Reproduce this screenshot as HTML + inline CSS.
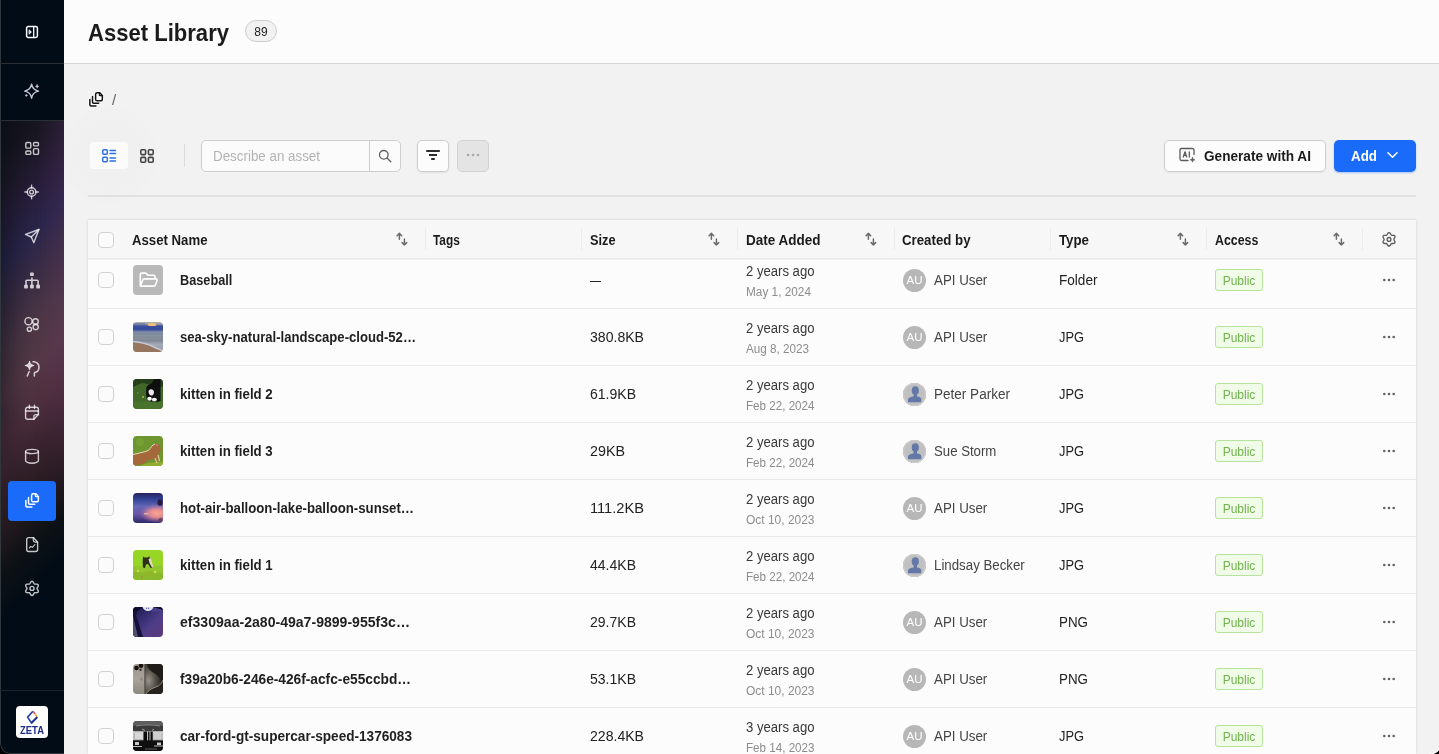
<!DOCTYPE html>
<html lang="en"><head><meta charset="utf-8"><title>Asset Library</title><style>
*{box-sizing:border-box;margin:0;padding:0}
html,body{width:1439px;height:754px;overflow:hidden;background:#f2f2f2}
body{font-family:"Liberation Sans",sans-serif;color:#1f1f1f;position:relative;font-size:14px}
#app{position:absolute;left:0;top:0;width:1439px;height:754px;overflow:hidden;will-change:transform}
.abs{position:absolute}
#side{position:absolute;z-index:5;left:0;top:0;width:64px;height:754px;background:#020c16;border-bottom-left-radius:10px;overflow:hidden}
#side .grad{position:absolute;left:0;top:121px;width:64px;height:569px;
 background:linear-gradient(135deg,#10111a 0%,#15141e 5%,#1b1825 9%,#261d38 16%,#29254a 23%,#3a2d44 30%,#4a3644 37%,#543846 44%,#4c2e3c 51%,#36222b 58%,#241a1e 65%,#0d1115 72%,#020c16 79%,#020c16 100%);
}
#side .grad2{position:absolute;left:0;top:121px;width:64px;height:400px;
 background:linear-gradient(90deg, rgba(6,10,18,.4) 0, rgba(6,10,18,.1) 30%, rgba(6,10,18,0) 50%, rgba(120,60,120,0) 55%, rgba(120,60,120,.16) 100%);
 -webkit-mask-image:linear-gradient(180deg,#000 0,#000 75%,transparent 100%);mask-image:linear-gradient(180deg,#000 0,#000 75%,transparent 100%)}
#side .ln{position:absolute;left:0;width:64px;height:1px;background:#2a2f36}
#side .edge{position:absolute;left:0;top:0;width:64px;height:754px;border-left:1px solid #30383d;border-bottom:1px solid #30383d;border-bottom-left-radius:10px}
#side .act{position:absolute;left:8px;top:481px;width:48px;height:40px;border-radius:4px;background:#1a6bfa}
#side svg{position:absolute;left:24px;width:16px;height:16px;overflow:visible}
#hdr{position:absolute;left:64px;top:0;width:1375px;height:64px;background:#fcfcfc;border-bottom:1px solid #d4d4d4}
#title{position:absolute;left:88px;top:18px;font-size:24px;font-weight:bold;line-height:30px;color:#1b1b1b;white-space:nowrap;transform-origin:0 50%}
#cnt{position:absolute;left:245px;top:20px;width:32px;height:22px;border:1px solid #cfcfcf;border-radius:11px;background:#f1f1f1;font-size:12px;line-height:22px;text-align:center;color:#222}
.t{position:absolute;white-space:nowrap;transform-origin:0 50%}
.b{font-weight:bold}
#tbl{position:absolute;left:88px;top:220px;width:1328px;height:534px;background:#fcfcfc;box-shadow:0 0 3px rgba(0,0,0,.13),0 0 1px rgba(0,0,0,.08)}
#thead{position:absolute;left:0;top:0;width:1328px;height:39px;background:#f7f7f7;border-bottom:1px solid #e8e8e8;box-shadow:0 1px 0 #f1f1f1}
.rl{position:absolute;left:0;width:1328px;height:1px;background:#e8e8e8}
.cb{position:absolute;width:16px;height:16px;border:1px solid #d2d2d2;border-radius:4px;background:#fbfbfb}
.sep{position:absolute;top:8px;width:1px;height:22px;background:#ececec}
.pub{position:absolute;width:48px;height:22px;border:1px solid #b6e49e;border-radius:3px;background:#f0fce8;color:#72b24e;font-size:12px;line-height:22px;text-align:center}
.av{position:absolute;width:23px;height:23px;border-radius:12px;background:#b7b7b7;color:#fff;font-size:11.5px;line-height:22.5px;text-align:center;overflow:hidden}
.th{position:absolute;width:30px;height:30px;border-radius:4px;overflow:hidden}
</style></head><body>
<div id="app">
<div class="abs" style="left:0;top:734px;width:20px;height:20px;background:#000;z-index:4"></div>
<div id="side"><div class="grad"></div><div class="grad2"></div><div class="edge"></div>
<div class="ln" style="top:63px"></div><div class="ln" style="top:120px"></div><div class="ln" style="top:690px;background:#1a222b"></div>
<div class="act"></div>
<svg style="top:24px" viewBox="0 0 16 16" fill="none" stroke="#fff" stroke-width="1.500" stroke-linejoin="round" stroke-linecap="round"><rect x="2.600" y="2.600" width="10.800" height="10.800" rx="1.700"/><path d="M9.700 2.600v10.800" stroke-width="1.300"/><path d="M5.300 6 L7.400 8 L5.300 10z" fill="#fff" stroke-width=".8"/></svg>
<svg style="top:83px" viewBox="0 0 16 16" fill="none" stroke="#c9c9d9" stroke-width="1.400" stroke-linejoin="round" stroke-linecap="round"><path d="M7.600 1.200C8.300 5.500 9.900 7.300 14.500 8.150 9.900 9 8.300 10.800 7.600 15.100 6.900 10.800 5.300 9 .700 8.150 5.300 7.300 6.900 5.500 7.600 1.200z"/><path d="M13.100 1.600c.2 1.200.6 1.600 1.800 1.800-1.200.2-1.600.6-1.800 1.800-.2-1.200-.6-1.600-1.800-1.800 1.200-.2 1.600-.6 1.800-1.800z" fill="#c9c9d9" stroke-width=".5"/><circle cx="2.300" cy="12.400" r=".9" fill="#c9c9d9" stroke-width=".4"/></svg>
<svg style="top:140px" viewBox="0 0 16 16" fill="none" stroke="rgba(255,255,255,.76)" stroke-width="1.400" stroke-linecap="round" stroke-linejoin="round"><rect x="1.800" y="2.500" width="5" height="5.600" rx="1.200"/><rect x="9.500" y="2.500" width="5" height="3.400" rx="1.200"/><rect x="1.800" y="11" width="5" height="3.400" rx="1.200"/><rect x="9.500" y="8.600" width="5" height="5.800" rx="1.200"/></svg>
<svg style="top:184px" viewBox="0 0 16 16" fill="none" stroke="rgba(255,255,255,.76)" stroke-width="1.400" stroke-linecap="round" stroke-linejoin="round"><circle cx="7.600" cy="8" r="4.300"/><circle cx="7.600" cy="8" r="1.900"/><path d="M7.600 1.300v2.400M7.600 12.300v2.400M.900 8h2.400M11.900 8h2.400"/></svg>
<svg style="top:228px" viewBox="0 0 16 16" fill="none" stroke="rgba(255,255,255,.76)" stroke-width="1.400" stroke-linecap="round" stroke-linejoin="round" stroke-width="1.300"><path d="M14.900 1.500 1.500 6.400l5.800 2.600 2.500 5.700z"/><path d="M14.900 1.500 7.300 9"/></svg>
<svg style="top:272px" viewBox="0 0 16 16" fill="rgba(255,255,255,.76)" stroke="none"><rect x="6" y=".5" width="3.800" height="3.600" rx=".8"/><rect x=".1" y="12.800" width="3.800" height="3.800" rx=".8"/><rect x="6" y="12.800" width="3.800" height="3.800" rx=".8"/><rect x="12.200" y="12.800" width="3.800" height="3.800" rx=".8"/><path d="M7.900 6v2.400M2 12.800V9.300a1 1 0 0 1 1-1h10.100a1 1 0 0 1 1 1v3.500M7.900 8.300v4.500" fill="none" stroke="rgba(255,255,255,.76)" stroke-width="1.600" stroke-linecap="round"/></svg>
<svg style="top:316px" viewBox="0 0 16 16" fill="none" stroke="rgba(255,255,255,.76)" stroke-width="1.400" stroke-linecap="round" stroke-linejoin="round" stroke-width="1.300"><circle cx="4.500" cy="5.200" r="3.600"/><circle cx="11.500" cy="5.500" r="2.800"/><circle cx="11.700" cy="11.100" r="2.600"/><circle cx="5.400" cy="13.200" r="2.100"/></svg>
<svg style="top:360px" viewBox="0 0 16 16" fill="none" stroke="rgba(255,255,255,.76)" stroke-width="1.400" stroke-linecap="round" stroke-linejoin="round"><path d="M9 1.800c3.500-.3 6 2.200 6 5.200 0 3-1 5-3.700 5.200-.6.100-.9.300-.9.900V16" stroke-width="1.500"/><path d="M5.500 1.300c.3 2.600 1.300 3.700 4.200 4.200-2.900.5-3.900 1.600-4.200 4.200C5.200 7.100 4.200 6 1.300 5.500 4.200 5 5.200 3.900 5.500 1.300z" fill="rgba(255,255,255,.76)" stroke-width="1.100"/><path d="M5.200 11.500 3.300 16" stroke-width="1.500"/></svg>
<svg style="top:404px" viewBox="0 0 16 16" fill="none" stroke="rgba(255,255,255,.76)" stroke-width="1.400" stroke-linecap="round" stroke-linejoin="round"><path d="M14.400 10.500V5.300a2 2 0 0 0-2-2H3.600a2 2 0 0 0-2 2v8a2 2 0 0 0 2 2h6.300z"/><path d="M14.400 10.600h-2.500a2 2 0 0 0-2 2v2.700M5.400 1.200v3.200M10.500 1.200v3.200M1.600 7h12.800"/></svg>
<svg style="top:448px" viewBox="0 0 16 16" fill="none" stroke="rgba(255,255,255,.76)" stroke-width="1.400" stroke-linecap="round" stroke-linejoin="round"><ellipse cx="8" cy="3.500" rx="6.400" ry="2.100"/><path d="M1.600 3.500v9c0 1.500 2.900 2.800 6.400 2.800s6.400-1.300 6.400-2.800v-9"/></svg>
<svg style="top:492px" viewBox="0 0 16 16" fill="none" stroke="#fff" stroke-width="1.500" stroke-linecap="round" stroke-linejoin="round"><path d="M9.200 1.850h2.600l2.550 2.700v3.700a1.600 1.600 0 0 1-1.600 1.600H9.200a1.600 1.600 0 0 1-1.600-1.600V3.450a1.600 1.600 0 0 1 1.600-1.600z"/><path d="M11.300 2v1.700a1 1 0 0 0 1 1h1.900" stroke-width="1.200"/><path d="M4.500 5.400v5.600a1.200 1.200 0 0 0 1.200 1.200h5"/><path d="M1.850 8.400v5.400a1.200 1.200 0 0 0 1.200 1.200h4.900"/></svg>
<svg style="top:536px" viewBox="0 0 16 16" fill="none" stroke="rgba(255,255,255,.76)" stroke-width="1.400" stroke-linecap="round" stroke-linejoin="round"><path d="M9.300 1.600H4.700a2 2 0 0 0-2 2v9.900a2 2 0 0 0 2 2h6.900a2 2 0 0 0 2-2V6z"/><path d="M9.300 1.700v2.400a2 2 0 0 0 2 2h2.200M5.400 11.900l1.400-1.500 1.600.9 2.500-2.600" stroke-width="1.200"/></svg>
<svg style="top:580px" viewBox="0 0 16 16" fill="none" stroke="rgba(255,255,255,.76)" stroke-width="1.400" stroke-linecap="round" stroke-linejoin="round"><path d="M13.00 8.40 L13.12 7.95 L13.44 7.44 L13.84 6.83 L14.18 6.15 L14.31 5.46 L14.15 4.85 L13.70 4.41 L13.04 4.17 L12.28 4.12 L11.55 4.17 L10.95 4.19 L10.50 4.07 L10.17 3.74 L9.89 3.21 L9.57 2.56 L9.14 1.92 L8.61 1.47 L8.00 1.30 L7.39 1.47 L6.86 1.92 L6.43 2.56 L6.11 3.21 L5.83 3.74 L5.50 4.07 L5.05 4.19 L4.45 4.17 L3.72 4.12 L2.96 4.17 L2.30 4.41 L1.85 4.85 L1.69 5.46 L1.82 6.15 L2.16 6.83 L2.56 7.44 L2.88 7.95 L3.00 8.40 L2.88 8.85 L2.56 9.36 L2.16 9.97 L1.82 10.65 L1.69 11.34 L1.85 11.95 L2.30 12.39 L2.96 12.63 L3.72 12.68 L4.45 12.63 L5.05 12.61 L5.50 12.73 L5.83 13.06 L6.11 13.59 L6.43 14.24 L6.86 14.88 L7.39 15.33 L8.00 15.50 L8.61 15.33 L9.14 14.88 L9.57 14.24 L9.89 13.59 L10.17 13.06 L10.50 12.73 L10.95 12.61 L11.55 12.63 L12.28 12.68 L13.04 12.63 L13.70 12.39 L14.15 11.95 L14.31 11.34 L14.18 10.65 L13.84 9.97 L13.44 9.36 L13.12 8.85Z"/><circle cx="8" cy="8.400" r="2"/></svg>
<div style="position:absolute;left:16px;top:706px;width:32px;height:32px;border-radius:4px;background:#fff"></div>
<svg style="left:16px;top:706px;width:32px;height:32px" viewBox="0 0 32 32"><path d="M16.900 5.300 11.600 11.100 15.500 16.900 21.200 11.100" fill="none" stroke="#2446b8" stroke-width="1.700" stroke-linejoin="miter"/><path d="M16.900 5.300 19 8" stroke="#e2574c" stroke-width="1.700"/><path d="M19 8 21.200 11.100" stroke="#e9b44c" stroke-width="1.700"/><path d="M15.500 16.900 21.200 11.100" stroke="#1b2f8a" stroke-width="1.700"/><text x="16" y="27.800" text-anchor="middle" font-family="Liberation Sans, sans-serif" font-weight="bold" font-size="10.500" fill="#1c2c84" textLength="24" lengthAdjust="spacingAndGlyphs">ZETA</text></svg>
</div>
<div id="hdr"></div>
<div id="title" style="transform:scaleX(0.9191)">Asset Library</div>
<div id="cnt">89</div>
<svg class="abs" style="left:88px;top:91px;overflow:visible" width="16" height="16" viewBox="0 0 16 16" fill="none" stroke="#141414" stroke-width="1.500" stroke-linecap="round" stroke-linejoin="round"><g stroke="#fbfbfb" stroke-width="3.600" fill="#fbfbfb"><path d="M9.200 1.850h2.600l2.550 2.700v3.700a1.600 1.600 0 0 1-1.600 1.600H9.200a1.600 1.600 0 0 1-1.600-1.600V3.450a1.600 1.600 0 0 1 1.600-1.600z"/><path d="M4.500 5.400v5.600a1.200 1.200 0 0 0 1.200 1.200h5"/><path d="M1.850 8.400v5.400a1.200 1.200 0 0 0 1.200 1.200h4.900"/></g><path d="M9.200 1.850h2.600l2.550 2.700v3.700a1.600 1.600 0 0 1-1.600 1.600H9.200a1.600 1.600 0 0 1-1.600-1.600V3.450a1.600 1.600 0 0 1 1.600-1.600z"/><path d="M11.300 2v1.700a1 1 0 0 0 1 1h1.900" stroke-width="1.200"/><path d="M4.500 5.400v5.600a1.200 1.200 0 0 0 1.200 1.200h5"/><path d="M1.850 8.400v5.400a1.200 1.200 0 0 0 1.200 1.200h4.900"/></svg>
<div class="t" style="left:112px;top:91px;font-size:15px;line-height:18px;color:#666">/</div>
<div class="abs" style="left:61px;top:107px;width:96px;height:96px;border-radius:48px;background:radial-gradient(circle,#efefef 0,#f0f0f0 50%,#f2f2f2 95%)"></div>
<div class="abs" style="left:90px;top:142px;width:38px;height:27px;border-radius:4px;background:#fbfbfb"></div>
<svg class="abs" style="left:101px;top:148px" width="16" height="16" viewBox="0 0 16 16" fill="none" stroke="#2f6fe6" stroke-width="1.500" stroke-linecap="round" stroke-linejoin="round"><rect x="1.700" y="1.700" width="4.600" height="4.600" rx="1"/><rect x="1.700" y="9.200" width="4.600" height="4.600" rx="1"/><path d="M9 2.500h5.500M9 5.500h5.500M9 10h5.500M9 13h5.500"/></svg>
<svg class="abs" style="left:139px;top:148px" width="16" height="16" viewBox="0 0 16 16" fill="none" stroke="#444" stroke-width="1.600" stroke-linejoin="round"><rect x="1.800" y="1.800" width="4.800" height="4.800" rx="1"/><rect x="9.400" y="1.800" width="4.800" height="4.800" rx="1"/><rect x="1.800" y="9.400" width="4.800" height="4.800" rx="1"/><rect x="9.400" y="9.400" width="4.800" height="4.800" rx="1"/></svg>
<div class="abs" style="left:184px;top:144px;width:1px;height:23px;background:#dcdcdc"></div>
<div class="abs" style="left:201px;top:140px;width:200px;height:32px;border:1px solid #cdcdcd;border-radius:5px;background:#fbfbfb"></div>
<div class="abs" style="left:369px;top:141px;width:1px;height:30px;background:#cdcdcd"></div>
<div class="t" style="transform:scaleX(0.9548);left:213px;top:147px;font-size:14px;line-height:18px;color:#b3b3b3">Describe an asset</div>
<svg class="abs" style="left:377px;top:147.500px" width="16" height="16" viewBox="0 0 16 16" fill="none" stroke="#606060" stroke-width="1.300" stroke-linecap="round"><circle cx="6.800" cy="6.800" r="4.300"/><path d="M10 10 13.800 13.800"/></svg>
<div class="abs" style="left:417px;top:140px;width:32px;height:32px;border:1px solid #cdcdcd;border-radius:5px;background:#fcfcfc;box-shadow:0 1px 2px rgba(0,0,0,.08)"></div>
<svg class="abs" style="left:425px;top:147px" width="16" height="16" viewBox="0 0 16 16" fill="none" stroke="#2e2e2e" stroke-width="1.800" stroke-linecap="butt"><path d="M1.200 4h13.600M4 8h8M6.200 12h3.600"/></svg>
<div class="abs" style="left:457px;top:140px;width:32px;height:32px;border:1px solid #d2d2d2;border-radius:5px;background:#e4e4e4"></div>
<svg class="abs" style="left:466px;top:153px" width="14" height="4" viewBox="0 0 14 4"><circle cx="2" cy="2" r="1.300" fill="#a9a9a9"/><circle cx="7" cy="2" r="1.300" fill="#a9a9a9"/><circle cx="12" cy="2" r="1.300" fill="#a9a9a9"/></svg>
<div class="abs" style="left:88px;top:195px;width:1328px;height:2px;background:#e0e0e0"></div>
<div class="abs" style="left:1164px;top:140px;width:162px;height:32px;border:1px solid #cdcdcd;border-radius:5px;background:#fcfcfc;box-shadow:0 1px 2px rgba(0,0,0,.06)"></div>
<svg class="abs" style="left:1179px;top:147px" width="17" height="17" viewBox="0 0 17 17" fill="none" stroke="#5a5a5a" stroke-width="1.300" stroke-linecap="round" stroke-linejoin="round"><path d="M15 7.500V3a1.500 1.500 0 0 0-1.500-1.500h-11A1.500 1.500 0 0 0 1 3v9a1.500 1.500 0 0 0 1.500 1.500H9"/><path d="M4.300 10 6 4.800 7.700 10M4.900 8.300h2.200M10.300 4.800V10"/><path d="M13.500 10.500c.2 1.500.8 2.100 2.300 2.300-1.500.2-2.100.8-2.300 2.300-.2-1.500-.8-2.100-2.300-2.300 1.500-.2 2.100-.8 2.300-2.300z" fill="#5a5a5a" stroke-width=".8"/></svg>
<div class="t b" style="transform:scaleX(0.9731);left:1203.5px;top:147px;font-size:14px;line-height:18px;color:#1b1b1b">Generate with AI</div>
<div class="abs" style="left:1334px;top:140px;width:82px;height:32px;border-radius:5px;background:#1a6bfa;box-shadow:0 1px 2px rgba(26,107,250,.35)"></div>
<div class="t b" style="transform:scaleX(0.9552);left:1350.5px;top:147px;font-size:14px;line-height:18px;color:#fff">Add</div>
<svg class="abs" style="left:1386px;top:150px" width="13" height="10" viewBox="0 0 13 10" fill="none" stroke="#fff" stroke-width="1.600" stroke-linecap="round" stroke-linejoin="round"><path d="M2 2.800 6.500 7.200 11 2.800"/></svg>

<div id="tbl">
<div class="cb" style="left:10px;top:52px"></div>
<div class="th" style="left:44.5px;top:45px"><svg viewBox="0 0 30 30" width="30" height="30" style="display:block"><rect width="30" height="30" fill="#b9b9b9"/><path d="M7.300 21V9.600c0-.9.600-1.500 1.500-1.500h3.600c.5 0 .9.200 1.200.6l1.200 1.600h5.700c.9 0 1.500.6 1.500 1.500v1.900M7.300 21l2.500-6c.3-.7.800-1.100 1.500-1.100H23c.9 0 1.400.8 1.100 1.600l-1.700 4.500c-.3.700-.8 1.100-1.500 1.100H8.400c-.7 0-1.100-.4-1.100-1.100z" fill="none" stroke="#fff" stroke-width="1.600" stroke-linejoin="round" stroke-linecap="round"/></svg>
</div>
<div class="t b" style="transform:scaleX(0.9081);left:92px;top:51.0px;font-size:14px;line-height:18px;color:#1f1f1f;">Baseball</div>
<div class="t" style="transform:scaleX(0.7857);left:502px;top:51.0px;font-size:14px;line-height:18px;color:#222;">—</div>
<div class="t" style="transform:scaleX(0.9362);left:658px;top:41.5px;font-size:14px;line-height:18px;color:#383838;">2 years ago</div>
<div class="t" style="transform:scaleX(0.9841);left:658px;top:63.5px;font-size:12px;line-height:16px;color:#8c8c8c;">May 1, 2024</div>
<div class="av" style="left:815px;top:48.5px">AU</div>
<div class="t" style="transform:scaleX(0.9515);left:846px;top:51.0px;font-size:14px;line-height:18px;color:#444;">API User</div>
<div class="t" style="transform:scaleX(0.9701);left:971px;top:51.0px;font-size:14px;line-height:18px;color:#222;">Folder</div>
<div class="pub" style="left:1127px;top:49px">Public</div>
<svg class="abs" style="left:1293.7px;top:58px" width="14" height="4" viewBox="0 0 14 4"><circle cx="2.300" cy="2" r="1.300" fill="#636363"/><circle cx="7" cy="2" r="1.300" fill="#636363"/><circle cx="11.700" cy="2" r="1.300" fill="#636363"/></svg>
<div class="rl" style="top:88px"></div>
<div class="cb" style="left:10px;top:109px"></div>
<div class="th" style="left:44.5px;top:102px">
<svg viewBox="0 0 30 30" width="30" height="30" style="display:block"><defs><linearGradient id="s1" x1="0" y1="0" x2="0" y2="1"><stop offset="0" stop-color="#b9b7a8"/><stop offset=".08" stop-color="#8f92a6"/><stop offset=".13" stop-color="#3a4c9c"/><stop offset=".27" stop-color="#4558a2"/><stop offset=".33" stop-color="#7f8ca6"/><stop offset=".5" stop-color="#8c949e"/><stop offset=".62" stop-color="#7f8896"/><stop offset=".75" stop-color="#a4a9b6"/><stop offset="1" stop-color="#9096a2"/></linearGradient></defs><rect width="30" height="30" fill="url(#s1)"/><ellipse cx="19" cy="2.500" rx="4.500" ry="1.600" fill="#f0c07c"/><path d="M0 1h12v2H0z" fill="#6a78a8" opacity=".7"/><path d="M0 5.500h30v2H0z" fill="#2f449a" opacity=".6"/><path d="M0 12h30M0 15h30" stroke="#6f7a90" stroke-width=".8" opacity=".6"/><path d="M0 20c6 .5 14 2 20 5s8 3.500 10 5H0z" fill="#96765e"/><path d="M0 19.500c6 .5 14 2 20 5 3 1.500 7 3 10 4.500" stroke="#c6c4d2" stroke-width="1.500" fill="none"/></svg>
</div>
<div class="t b" style="transform:scaleX(0.9362);left:92px;top:108.0px;font-size:14px;line-height:18px;color:#1f1f1f;">sea-sky-natural-landscape-cloud-52…</div>
<div class="t" style="transform:scaleX(1.0052);left:502px;top:108.0px;font-size:14px;line-height:18px;color:#222;">380.8KB</div>
<div class="t" style="transform:scaleX(0.9362);left:658px;top:98.5px;font-size:14px;line-height:18px;color:#383838;">2 years ago</div>
<div class="t" style="transform:scaleX(0.9732);left:658px;top:120.5px;font-size:12px;line-height:16px;color:#8c8c8c;">Aug 8, 2023</div>
<div class="av" style="left:815px;top:105.5px">AU</div>
<div class="t" style="transform:scaleX(0.9515);left:846px;top:108.0px;font-size:14px;line-height:18px;color:#444;">API User</div>
<div class="t" style="transform:scaleX(0.9180);left:971px;top:108.0px;font-size:14px;line-height:18px;color:#222;">JPG</div>
<div class="pub" style="left:1127px;top:106px">Public</div>
<svg class="abs" style="left:1293.7px;top:115px" width="14" height="4" viewBox="0 0 14 4"><circle cx="2.300" cy="2" r="1.300" fill="#636363"/><circle cx="7" cy="2" r="1.300" fill="#636363"/><circle cx="11.700" cy="2" r="1.300" fill="#636363"/></svg>
<div class="rl" style="top:145px"></div>
<div class="cb" style="left:10px;top:166px"></div>
<div class="th" style="left:44.5px;top:159px">
<svg viewBox="0 0 30 30" width="30" height="30" style="display:block"><rect width="30" height="30" fill="#40692a"/><path d="M0 0h30v8L20 6 9 4 0 8z" fill="#263f1a"/><path d="M13.500 8.500c.5-2 2.500-3.500 4.500-3.500l3-4.500 2-.5h4.500v22l-3 1.500-6-.5-4-1.500c-1.500-4-1.800-8.500-1-13z" fill="#0d100e"/><path d="M15.500 12c1-1.800 3.200-2.300 4.800-.8 1.200 1.500.8 4-.8 5.200-2.300.8-4.200-1.500-4-4.400z" fill="#e9e9e9"/><ellipse cx="16.500" cy="19.800" rx="2.300" ry="2" fill="#f6f6f6"/><ellipse cx="21.300" cy="20.600" rx="2.500" ry="1.900" fill="#f1f1f1"/><circle cx="10" cy="18" r="1" fill="#b6c23a"/><circle cx="5" cy="14" r=".8" fill="#6e9a44"/><path d="M0 22.500h30V30H0z" fill="#4b7a2e" opacity=".65"/></svg>
</div>
<div class="t b" style="transform:scaleX(0.9458);left:92px;top:165.0px;font-size:14px;line-height:18px;color:#1f1f1f;">kitten in field 2</div>
<div class="t" style="transform:scaleX(1.0014);left:502px;top:165.0px;font-size:14px;line-height:18px;color:#222;">61.9KB</div>
<div class="t" style="transform:scaleX(0.9362);left:658px;top:155.5px;font-size:14px;line-height:18px;color:#383838;">2 years ago</div>
<div class="t" style="transform:scaleX(0.9684);left:658px;top:177.5px;font-size:12px;line-height:16px;color:#8c8c8c;">Feb 22, 2024</div>
<div class="av" style="left:815px;top:162.5px"><svg viewBox="0 0 23 23" width="23" height="23" style="display:block"><rect width="23" height="23" fill="#c0c0c0"/><circle cx="11.500" cy="11.500" r="11" fill="none" stroke="#cfcfcf" stroke-width="1"/><ellipse cx="12.300" cy="7.600" rx="3.600" ry="4.300" fill="#6478a8"/><rect x="10.600" y="10" width="3.400" height="4.500" fill="#6478a8"/><path d="M5 19.300V16.500c0-1.500 2-2.200 5-2.900h4.600c3 .7 3.700 1.400 3.700 2.900v2.800z" fill="#6478a8"/></svg></div>
<div class="t" style="transform:scaleX(0.9670);left:846px;top:165.0px;font-size:14px;line-height:18px;color:#444;">Peter Parker</div>
<div class="t" style="transform:scaleX(0.9180);left:971px;top:165.0px;font-size:14px;line-height:18px;color:#222;">JPG</div>
<div class="pub" style="left:1127px;top:163px">Public</div>
<svg class="abs" style="left:1293.7px;top:172px" width="14" height="4" viewBox="0 0 14 4"><circle cx="2.300" cy="2" r="1.300" fill="#636363"/><circle cx="7" cy="2" r="1.300" fill="#636363"/><circle cx="11.700" cy="2" r="1.300" fill="#636363"/></svg>
<div class="rl" style="top:202px"></div>
<div class="cb" style="left:10px;top:223px"></div>
<div class="th" style="left:44.5px;top:216px">
<svg viewBox="0 0 30 30" width="30" height="30" style="display:block"><rect width="30" height="30" fill="#6d962e"/><circle cx="7" cy="6" r="4" fill="#7aa23a" opacity=".7"/><path d="M0 18.500c5-1 11-2.500 15.500-4 2-2.500 3.500-5.500 6.500-6.500 2-.5 4 .5 5 2.500.8 1.500 1 3 .5 4.500l-1.500 2-1.500 4 1 4.500-3 .5-1.500-3.500-5 1.500-5 3.500-6 1.500-5 1z" fill="#a4683a"/><path d="M0 18.500c5-1 11-2.500 15.500-4 2-2.500 3.500-5.500 6.500-6.500" stroke="#e8dcc0" stroke-width="1" fill="none"/><path d="M22.500 8.500l1.500-.8 1.500 1.500-1.500 1z" fill="#e0707a"/><path d="M7 30c3-2 7-3 11-3.500l12-1V30z" fill="#8fae2f"/><path d="M22 22l2 5M25 19l1.500 6" stroke="#e3c79a" stroke-width="1.200"/></svg>
</div>
<div class="t b" style="transform:scaleX(0.9458);left:92px;top:222.0px;font-size:14px;line-height:18px;color:#1f1f1f;">kitten in field 3</div>
<div class="t" style="transform:scaleX(1.0219);left:502px;top:222.0px;font-size:14px;line-height:18px;color:#222;">29KB</div>
<div class="t" style="transform:scaleX(0.9362);left:658px;top:212.5px;font-size:14px;line-height:18px;color:#383838;">2 years ago</div>
<div class="t" style="transform:scaleX(0.9684);left:658px;top:234.5px;font-size:12px;line-height:16px;color:#8c8c8c;">Feb 22, 2024</div>
<div class="av" style="left:815px;top:219.5px"><svg viewBox="0 0 23 23" width="23" height="23" style="display:block"><rect width="23" height="23" fill="#c0c0c0"/><circle cx="11.500" cy="11.500" r="11" fill="none" stroke="#cfcfcf" stroke-width="1"/><ellipse cx="12.300" cy="7.600" rx="3.600" ry="4.300" fill="#6478a8"/><rect x="10.600" y="10" width="3.400" height="4.500" fill="#6478a8"/><path d="M5 19.300V16.500c0-1.500 2-2.200 5-2.900h4.600c3 .7 3.700 1.400 3.700 2.900v2.800z" fill="#6478a8"/></svg></div>
<div class="t" style="transform:scaleX(0.9419);left:846px;top:222.0px;font-size:14px;line-height:18px;color:#444;">Sue Storm</div>
<div class="t" style="transform:scaleX(0.9180);left:971px;top:222.0px;font-size:14px;line-height:18px;color:#222;">JPG</div>
<div class="pub" style="left:1127px;top:220px">Public</div>
<svg class="abs" style="left:1293.7px;top:229px" width="14" height="4" viewBox="0 0 14 4"><circle cx="2.300" cy="2" r="1.300" fill="#636363"/><circle cx="7" cy="2" r="1.300" fill="#636363"/><circle cx="11.700" cy="2" r="1.300" fill="#636363"/></svg>
<div class="rl" style="top:259px"></div>
<div class="cb" style="left:10px;top:280px"></div>
<div class="th" style="left:44.5px;top:273px">
<svg viewBox="0 0 30 30" width="30" height="30" style="display:block"><defs><linearGradient id="b1" x1="0" y1="0" x2="0" y2="1"><stop offset="0" stop-color="#24225c"/><stop offset=".22" stop-color="#34459a"/><stop offset=".45" stop-color="#6566b6"/><stop offset=".7" stop-color="#6a57a8"/><stop offset="1" stop-color="#2c2868"/></linearGradient><radialGradient id="b2" cx=".8" cy=".68" r=".6" gradientTransform="translate(0 .32) scale(1 .53)"><stop offset="0" stop-color="#ffa88c"/><stop offset=".45" stop-color="#f29290" stop-opacity=".85"/><stop offset="1" stop-color="#b070a8" stop-opacity="0"/></radialGradient></defs><rect width="30" height="30" fill="url(#b1)"/><rect width="30" height="30" fill="url(#b2)"/><ellipse cx="27" cy="9.500" rx="2.600" ry="3.200" fill="#2a1c38"/><circle cx="27.500" cy="27" r="2" fill="#6a4060"/><rect x="11" y="20.300" width="4" height="1" fill="#ffe9b0" opacity=".8"/></svg>
</div>
<div class="t b" style="transform:scaleX(0.9431);left:92px;top:279.0px;font-size:14px;line-height:18px;color:#1f1f1f;">hot-air-balloon-lake-balloon-sunset…</div>
<div class="t" style="transform:scaleX(1.0457);left:502px;top:279.0px;font-size:14px;line-height:18px;color:#222;">111.2KB</div>
<div class="t" style="transform:scaleX(0.9362);left:658px;top:269.5px;font-size:14px;line-height:18px;color:#383838;">2 years ago</div>
<div class="t" style="transform:scaleX(0.9968);left:658px;top:291.5px;font-size:12px;line-height:16px;color:#8c8c8c;">Oct 10, 2023</div>
<div class="av" style="left:815px;top:276.5px">AU</div>
<div class="t" style="transform:scaleX(0.9515);left:846px;top:279.0px;font-size:14px;line-height:18px;color:#444;">API User</div>
<div class="t" style="transform:scaleX(0.9180);left:971px;top:279.0px;font-size:14px;line-height:18px;color:#222;">JPG</div>
<div class="pub" style="left:1127px;top:277px">Public</div>
<svg class="abs" style="left:1293.7px;top:286px" width="14" height="4" viewBox="0 0 14 4"><circle cx="2.300" cy="2" r="1.300" fill="#636363"/><circle cx="7" cy="2" r="1.300" fill="#636363"/><circle cx="11.700" cy="2" r="1.300" fill="#636363"/></svg>
<div class="rl" style="top:316px"></div>
<div class="cb" style="left:10px;top:337px"></div>
<div class="th" style="left:44.5px;top:330px">
<svg viewBox="0 0 30 30" width="30" height="30" style="display:block"><rect width="30" height="30" fill="#97d527"/><path d="M0 17c5-1.500 10 0 15-.5s10-1.500 15-.5v14H0z" fill="#93c52e"/><path d="M0 22c4-1 8 1 12 0s8-1 12 .5 4 .5 6 0V30H0z" fill="#8ab52c" opacity=".8"/><circle cx="5" cy="21" r="1.300" fill="#c9d84a"/><circle cx="14" cy="24" r="1.500" fill="#b9a33a" opacity=".7"/><circle cx="22" cy="22" r="1.300" fill="#d3dc50"/><circle cx="9" cy="27" r="1.200" fill="#a88a3a" opacity=".6"/><path d="M10 6.500l1.500 1h3l2-1.200 1 3.200-.5 3 2.500 5-2 .5-2.500-4-2 .500-1 3.500-2-.5c-.5-3.500-.3-7.500 0-11z" fill="#2c3018"/><path d="M15.500 9l2.500-1 1 5 1.500 4-1.500.5-2.500-4.500z" fill="#e3d8c0"/><path d="M16 7.500l1-.8.500 2z" fill="#c97060"/></svg>
</div>
<div class="t b" style="transform:scaleX(0.9458);left:92px;top:336.0px;font-size:14px;line-height:18px;color:#1f1f1f;">kitten in field 1</div>
<div class="t" style="transform:scaleX(1.0014);left:502px;top:336.0px;font-size:14px;line-height:18px;color:#222;">44.4KB</div>
<div class="t" style="transform:scaleX(0.9362);left:658px;top:326.5px;font-size:14px;line-height:18px;color:#383838;">2 years ago</div>
<div class="t" style="transform:scaleX(0.9684);left:658px;top:348.5px;font-size:12px;line-height:16px;color:#8c8c8c;">Feb 22, 2024</div>
<div class="av" style="left:815px;top:333.5px"><svg viewBox="0 0 23 23" width="23" height="23" style="display:block"><rect width="23" height="23" fill="#c0c0c0"/><circle cx="11.500" cy="11.500" r="11" fill="none" stroke="#cfcfcf" stroke-width="1"/><ellipse cx="12.300" cy="7.600" rx="3.600" ry="4.300" fill="#6478a8"/><rect x="10.600" y="10" width="3.400" height="4.500" fill="#6478a8"/><path d="M5 19.300V16.500c0-1.500 2-2.200 5-2.900h4.600c3 .7 3.700 1.400 3.700 2.900v2.800z" fill="#6478a8"/></svg></div>
<div class="t" style="transform:scaleX(0.9486);left:846px;top:336.0px;font-size:14px;line-height:18px;color:#444;">Lindsay Becker</div>
<div class="t" style="transform:scaleX(0.9180);left:971px;top:336.0px;font-size:14px;line-height:18px;color:#222;">JPG</div>
<div class="pub" style="left:1127px;top:334px">Public</div>
<svg class="abs" style="left:1293.7px;top:343px" width="14" height="4" viewBox="0 0 14 4"><circle cx="2.300" cy="2" r="1.300" fill="#636363"/><circle cx="7" cy="2" r="1.300" fill="#636363"/><circle cx="11.700" cy="2" r="1.300" fill="#636363"/></svg>
<div class="rl" style="top:373px"></div>
<div class="cb" style="left:10px;top:394px"></div>
<div class="th" style="left:44.5px;top:387px">
<svg viewBox="0 0 30 30" width="30" height="30" style="display:block"><defs><linearGradient id="p1" x1="0" y1="0" x2="1" y2="1"><stop offset="0" stop-color="#1c1848"/><stop offset=".35" stop-color="#352d70"/><stop offset=".6" stop-color="#4d3d88"/><stop offset="1" stop-color="#5d3a78"/></linearGradient></defs><rect width="30" height="30" fill="url(#p1)"/><path d="M0 0h6L3 8l7 22H0z" fill="#15123a"/><path d="M0 9l5 21H0z" fill="#6a6a8a" opacity=".7"/><path d="M12 0h16l2 4-10 1z" fill="#57489a" opacity=".6"/><path d="M0 0h10l-4 3-6 2zM20 0h10v3z" fill="#0e0c28"/><path d="M9.500 0c1 2.500 3 4 5.500 4s4.500-1.500 5.500-4z" fill="#e9e9f2"/><path d="M13 .8h1.200v1H13zM15 .8h1.200v1H15z" fill="#3a4ab0"/></svg>
</div>
<div class="t b" style="transform:scaleX(1.0051);left:92px;top:393.0px;font-size:14px;line-height:18px;color:#1f1f1f;">ef3309aa-2a80-49a7-9899-955f3c…</div>
<div class="t" style="transform:scaleX(1.0014);left:502px;top:393.0px;font-size:14px;line-height:18px;color:#222;">29.7KB</div>
<div class="t" style="transform:scaleX(0.9362);left:658px;top:383.5px;font-size:14px;line-height:18px;color:#383838;">2 years ago</div>
<div class="t" style="transform:scaleX(0.9968);left:658px;top:405.5px;font-size:12px;line-height:16px;color:#8c8c8c;">Oct 10, 2023</div>
<div class="av" style="left:815px;top:390.5px">AU</div>
<div class="t" style="transform:scaleX(0.9515);left:846px;top:393.0px;font-size:14px;line-height:18px;color:#444;">API User</div>
<div class="t" style="transform:scaleX(0.9557);left:971px;top:393.0px;font-size:14px;line-height:18px;color:#222;">PNG</div>
<div class="pub" style="left:1127px;top:391px">Public</div>
<svg class="abs" style="left:1293.7px;top:400px" width="14" height="4" viewBox="0 0 14 4"><circle cx="2.300" cy="2" r="1.300" fill="#636363"/><circle cx="7" cy="2" r="1.300" fill="#636363"/><circle cx="11.700" cy="2" r="1.300" fill="#636363"/></svg>
<div class="rl" style="top:430px"></div>
<div class="cb" style="left:10px;top:451px"></div>
<div class="th" style="left:44.5px;top:444px">
<svg viewBox="0 0 30 30" width="30" height="30" style="display:block"><defs><linearGradient id="i1" x1="0" y1="0" x2="0" y2="1"><stop offset="0" stop-color="#9a948c"/><stop offset=".5" stop-color="#aaa39b"/><stop offset="1" stop-color="#8e8880"/></linearGradient><radialGradient id="i2" cx=".2" cy=".55" r=".7"><stop offset="0" stop-color="#9a9288"/><stop offset=".5" stop-color="#5a554e"/><stop offset="1" stop-color="#2a2724"/></radialGradient></defs><rect width="30" height="30" fill="url(#i1)"/><rect x="12" width="18" height="30" fill="url(#i2)"/><path d="M14 0h16v22c-1-6-4-10-9-13S14 3 14 0z" fill="#1f1c1a"/><path d="M13 30c2-4 6-5.500 10-7s6-4 7-8v15z" fill="#26231f"/><path d="M13 30c2-4 6-5.500 10-7s6-4 7-7" fill="none" stroke="#b5ab9c" stroke-width=".9" opacity=".8"/><rect x="11.300" y="0" width="1" height="30" fill="#4e4a45"/><circle cx="3.500" cy="4" r="2.300" fill="#16100f"/><circle cx="8" cy="1.800" r="2.300" fill="#16100f"/><circle cx="7.500" cy="5.800" r="1.200" fill="#3a3430"/><ellipse cx="8.500" cy="15" rx="1.600" ry="1.800" fill="#8f887e"/></svg>
</div>
<div class="t b" style="transform:scaleX(0.9796);left:92px;top:450.0px;font-size:14px;line-height:18px;color:#1f1f1f;">f39a20b6-246e-426f-acfc-e55ccbd…</div>
<div class="t" style="transform:scaleX(1.0014);left:502px;top:450.0px;font-size:14px;line-height:18px;color:#222;">53.1KB</div>
<div class="t" style="transform:scaleX(0.9362);left:658px;top:440.5px;font-size:14px;line-height:18px;color:#383838;">2 years ago</div>
<div class="t" style="transform:scaleX(0.9968);left:658px;top:462.5px;font-size:12px;line-height:16px;color:#8c8c8c;">Oct 10, 2023</div>
<div class="av" style="left:815px;top:447.5px">AU</div>
<div class="t" style="transform:scaleX(0.9515);left:846px;top:450.0px;font-size:14px;line-height:18px;color:#444;">API User</div>
<div class="t" style="transform:scaleX(0.9557);left:971px;top:450.0px;font-size:14px;line-height:18px;color:#222;">PNG</div>
<div class="pub" style="left:1127px;top:448px">Public</div>
<svg class="abs" style="left:1293.7px;top:457px" width="14" height="4" viewBox="0 0 14 4"><circle cx="2.300" cy="2" r="1.300" fill="#636363"/><circle cx="7" cy="2" r="1.300" fill="#636363"/><circle cx="11.700" cy="2" r="1.300" fill="#636363"/></svg>
<div class="rl" style="top:487px"></div>
<div class="cb" style="left:10px;top:508px"></div>
<div class="th" style="left:44.5px;top:501px">
<svg viewBox="0 0 30 30" width="30" height="30" style="display:block"><rect width="30" height="30" fill="#3b3b3b"/><path d="M0 0h30v5c-8-2-22-2-30 0z" fill="#5e5e5e"/><path d="M3 5c7-1.500 17-1.500 24 0" stroke="#8a8a8a" stroke-width="1" fill="none"/><path d="M9 8l3 1.500M21 8l-2 1.500" stroke="#bdbdbd" stroke-width=".8"/><rect y="10.500" width="30" height="9" fill="#b9b9b9"/><rect x="2" y="12" width="8" height="6" fill="#d8d8d8"/><rect x="20.500" y="12" width="8" height="6" fill="#cfcfcf"/><rect y="10.500" width="30" height="1" fill="#e8e8e8"/><rect x="10.500" y="10.500" width="3.500" height="11" fill="#0c0c0c"/><rect x="15" y="10.500" width="1.500" height="11" fill="#1a1a1a"/><rect x="17.500" y="10.500" width="2.200" height="11" fill="#0c0c0c"/><rect y="19.500" width="30" height="10.500" fill="#0f0f0f"/><path d="M2 21h4v3H2zM24 21.500h4v2.500h-4z" fill="#c9c9c9"/><path d="M0 25.500h9M21 25h9" stroke="#bdbdbd" stroke-width="1"/><path d="M12 28h12" stroke="#5e5e5e" stroke-width="1"/></svg>
</div>
<div class="t b" style="transform:scaleX(0.9712);left:92px;top:507.0px;font-size:14px;line-height:18px;color:#1f1f1f;">car-ford-gt-supercar-speed-1376083</div>
<div class="t" style="transform:scaleX(1.0052);left:502px;top:507.0px;font-size:14px;line-height:18px;color:#222;">228.4KB</div>
<div class="t" style="transform:scaleX(0.9362);left:658px;top:497.5px;font-size:14px;line-height:18px;color:#383838;">3 years ago</div>
<div class="t" style="transform:scaleX(0.9684);left:658px;top:519.5px;font-size:12px;line-height:16px;color:#8c8c8c;">Feb 14, 2023</div>
<div class="av" style="left:815px;top:504.5px">AU</div>
<div class="t" style="transform:scaleX(0.9515);left:846px;top:507.0px;font-size:14px;line-height:18px;color:#444;">API User</div>
<div class="t" style="transform:scaleX(0.9180);left:971px;top:507.0px;font-size:14px;line-height:18px;color:#222;">JPG</div>
<div class="pub" style="left:1127px;top:505px">Public</div>
<svg class="abs" style="left:1293.7px;top:514px" width="14" height="4" viewBox="0 0 14 4"><circle cx="2.300" cy="2" r="1.300" fill="#636363"/><circle cx="7" cy="2" r="1.300" fill="#636363"/><circle cx="11.700" cy="2" r="1.300" fill="#636363"/></svg>
<div id="thead">
<div class="cb" style="left:10px;top:12px"></div>
<div class="t b" style="transform:scaleX(0.9419);left:44px;top:11.0px;font-size:14px;line-height:18px;color:#1b1b1b;">Asset Name</div>
<svg class="abs" style="left:307.5px;top:12px" width="13" height="15" viewBox="0 0 13 15" fill="none" stroke="#6c6c6c" stroke-width="1.500" stroke-linecap="round" stroke-linejoin="round"><path d="M3.400 7.300V1.400M1.100 3.700 3.400 1.400l2.300 2.300M8.400 7v5.900M6.100 10.600l2.300 2.300 2.300-2.300"/></svg>
<div class="sep" style="left:337px"></div>
<div class="t b" style="transform:scaleX(0.8470);left:345px;top:11.0px;font-size:14px;line-height:18px;color:#1b1b1b;">Tags</div>
<div class="sep" style="left:493px"></div>
<div class="t b" style="transform:scaleX(0.9102);left:501.5px;top:11.0px;font-size:14px;line-height:18px;color:#1b1b1b;">Size</div>
<svg class="abs" style="left:620px;top:12px" width="13" height="15" viewBox="0 0 13 15" fill="none" stroke="#6c6c6c" stroke-width="1.500" stroke-linecap="round" stroke-linejoin="round"><path d="M3.400 7.300V1.400M1.100 3.700 3.400 1.400l2.300 2.300M8.400 7v5.900M6.100 10.600l2.300 2.300 2.300-2.300"/></svg>
<div class="sep" style="left:649px"></div>
<div class="t b" style="transform:scaleX(0.9640);left:658px;top:11.0px;font-size:14px;line-height:18px;color:#1b1b1b;">Date Added</div>
<svg class="abs" style="left:776.5px;top:12px" width="13" height="15" viewBox="0 0 13 15" fill="none" stroke="#6c6c6c" stroke-width="1.500" stroke-linecap="round" stroke-linejoin="round"><path d="M3.400 7.300V1.400M1.100 3.700 3.400 1.400l2.300 2.300M8.400 7v5.900M6.100 10.600l2.300 2.300 2.300-2.300"/></svg>
<div class="sep" style="left:805.5px"></div>
<div class="t b" style="transform:scaleX(0.9467);left:814px;top:11.0px;font-size:14px;line-height:18px;color:#1b1b1b;">Created by</div>
<div class="sep" style="left:962px"></div>
<div class="t b" style="transform:scaleX(0.9481);left:971px;top:11.0px;font-size:14px;line-height:18px;color:#1b1b1b;">Type</div>
<svg class="abs" style="left:1088.7px;top:12px" width="13" height="15" viewBox="0 0 13 15" fill="none" stroke="#6c6c6c" stroke-width="1.500" stroke-linecap="round" stroke-linejoin="round"><path d="M3.400 7.300V1.400M1.100 3.700 3.400 1.400l2.300 2.300M8.400 7v5.900M6.100 10.600l2.300 2.300 2.300-2.300"/></svg>
<div class="sep" style="left:1118px"></div>
<div class="t b" style="transform:scaleX(0.8828);left:1127px;top:11.0px;font-size:14px;line-height:18px;color:#1b1b1b;">Access</div>
<svg class="abs" style="left:1244.7px;top:12px" width="13" height="15" viewBox="0 0 13 15" fill="none" stroke="#6c6c6c" stroke-width="1.500" stroke-linecap="round" stroke-linejoin="round"><path d="M3.400 7.300V1.400M1.100 3.700 3.400 1.400l2.300 2.300M8.400 7v5.900M6.100 10.600l2.300 2.300 2.300-2.300"/></svg>
<div class="sep" style="left:1274px"></div>
<svg class="abs" style="left:1293.2px;top:11px" width="16" height="16" viewBox="0 0 16 16" fill="none" stroke="#595959" stroke-width="1.300" stroke-linejoin="round"><path d="M12.85 8.40 L12.96 7.97 L13.24 7.48 L13.60 6.90 L13.90 6.25 L14.00 5.60 L13.85 5.03 L13.43 4.60 L12.81 4.37 L12.10 4.30 L11.42 4.32 L10.85 4.32 L10.43 4.20 L10.10 3.89 L9.82 3.40 L9.50 2.80 L9.09 2.22 L8.58 1.80 L8.00 1.65 L7.42 1.80 L6.91 2.22 L6.50 2.80 L6.18 3.40 L5.90 3.89 L5.58 4.20 L5.15 4.32 L4.58 4.32 L3.90 4.30 L3.19 4.37 L2.57 4.60 L2.15 5.02 L2.00 5.60 L2.10 6.25 L2.40 6.90 L2.76 7.48 L3.04 7.97 L3.15 8.40 L3.04 8.83 L2.76 9.32 L2.40 9.90 L2.10 10.55 L2.00 11.20 L2.15 11.78 L2.57 12.20 L3.19 12.43 L3.90 12.50 L4.58 12.48 L5.15 12.48 L5.57 12.60 L5.90 12.91 L6.18 13.40 L6.50 14.00 L6.91 14.58 L7.42 15.00 L8.00 15.15 L8.58 15.00 L9.09 14.58 L9.50 14.00 L9.82 13.40 L10.10 12.91 L10.42 12.60 L10.85 12.48 L11.42 12.48 L12.10 12.50 L12.81 12.43 L13.43 12.20 L13.85 11.77 L14.00 11.20 L13.90 10.55 L13.60 9.90 L13.24 9.32 L12.96 8.83Z"/><circle cx="8" cy="8.400" r="1.900"/></svg>
</div>
</div>
<div class="abs" style="left:1429px;top:744px;width:10px;height:10px;background:radial-gradient(circle 10px at 2px 0px,rgba(0,0,0,0) 9.300px,#fff 9.800px,#000 10.600px)"></div>
</div>
</body></html>
